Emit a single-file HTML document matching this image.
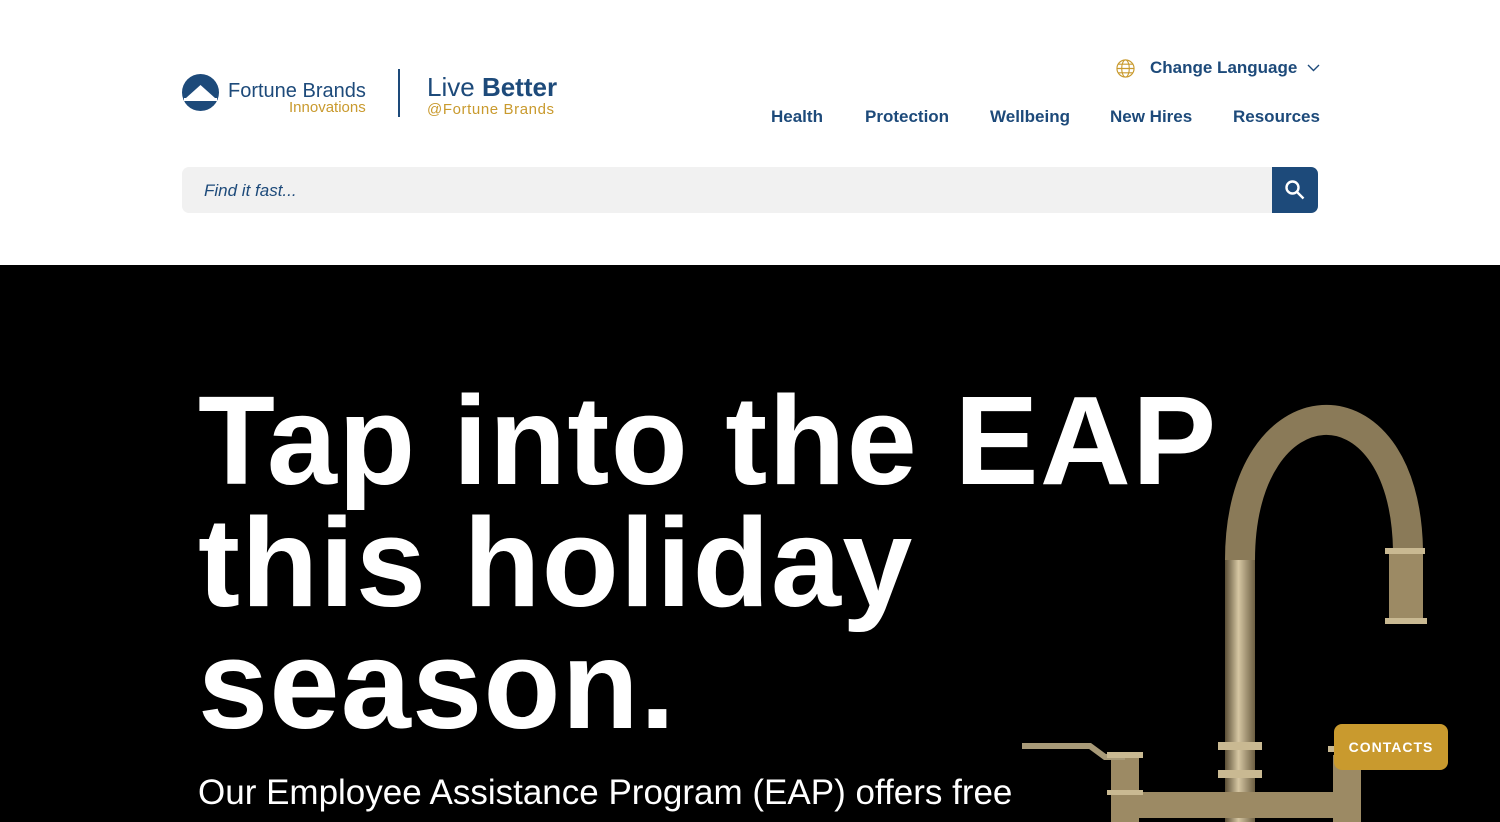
<!DOCTYPE html>
<html><head><meta charset="utf-8"><style>
*{margin:0;padding:0;box-sizing:border-box}
body{width:1500px;height:822px;overflow:hidden;background:#fff;font-family:"Liberation Sans",sans-serif;position:relative}
.blue{color:#1d4a7a}
.gold{color:#c99a2e}
.nav a{position:absolute;top:107px;font-size:17px;font-weight:bold;color:#1d4a7a;text-decoration:none}
.hero{position:absolute;left:0;top:265px;width:1500px;height:557px;background:#000;overflow:hidden}
.h1{position:absolute;left:198px;color:#fff;font-weight:bold;font-size:126px;letter-spacing:1.3px;line-height:1;white-space:nowrap}
</style></head><body>
<svg style="position:absolute;left:182px;top:74px" width="37" height="37" viewBox="0 0 37 37"><circle cx="18.5" cy="18.5" r="18.5" fill="#1d4a7a"/><path d="M4 24 L18.5 11 L33 24 Z" fill="#fff"/><rect x="2" y="24" width="33" height="3" fill="#fff"/></svg>
<div class="blue" style="position:absolute;left:228px;top:80px;font-size:20px">Fortune Brands</div>
<div class="gold" style="position:absolute;left:289px;top:99px;font-size:15px">Innovations</div>
<div style="position:absolute;left:398px;top:69px;width:2px;height:48px;background:#1d4a7a"></div>
<div class="blue" style="position:absolute;left:427px;top:72px;font-size:26px"><span style="font-weight:300">Live</span> <b>Better</b></div>
<div class="gold" style="position:absolute;left:427px;top:101px;font-size:15px;letter-spacing:.6px">@Fortune Brands</div>
<svg style="position:absolute;left:1116px;top:59px" width="19" height="19" viewBox="0 0 20 20" fill="none" stroke="#c99a2e" stroke-width="1.2"><circle cx="10" cy="10" r="9"/><ellipse cx="10" cy="10" rx="4" ry="9"/><path d="M1 10h18M2.5 5.5h15M2.5 14.5h15"/></svg>
<div class="blue" style="position:absolute;left:1150px;top:58px;font-size:17px;font-weight:bold">Change Language</div>
<svg style="position:absolute;left:1307px;top:64px" width="13" height="8" viewBox="0 0 13 8"><path d="M1 1l5.5 5.5L12 1" fill="none" stroke="#1d4a7a" stroke-width="1.4"/></svg>
<div class="nav"><a style="left:771px">Health</a><a style="left:865px">Protection</a><a style="left:990px">Wellbeing</a><a style="left:1110px">New Hires</a><a style="left:1233px">Resources</a></div>
<div style="position:absolute;left:182px;top:167px;width:1136px;height:46px;background:#f1f1f1;border-radius:7px"></div>
<div style="position:absolute;left:204px;top:181px;font-size:17px;font-style:italic;color:#1d4a7a">Find it fast...</div>
<div style="position:absolute;left:1272px;top:167px;width:46px;height:46px;background:#1d4a7a;border-radius:0 7px 7px 0"></div>
<svg style="position:absolute;left:1284px;top:179px" width="22" height="22" viewBox="0 0 22 22" fill="none" stroke="#fff" stroke-width="2.4"><circle cx="8.5" cy="8.5" r="6"/><path d="M13 13l6.5 6.5"/></svg>
<div class="hero">
<svg style="position:absolute;left:0;top:0" width="1500" height="557" viewBox="0 265 1500 557">
<defs><linearGradient id="g" gradientUnits="userSpaceOnUse" x1="1225" y1="0" x2="1255" y2="0"><stop offset="0" stop-color="#5a4d35"/><stop offset=".45" stop-color="#d6c7a3"/><stop offset="1" stop-color="#6c5e42"/></linearGradient></defs>
<path d="M1240 560 C1240 380 1405 370 1408 550" fill="none" stroke="#8a7a58" stroke-width="30"/>
<path d="M1240 830 L1240 560" fill="none" stroke="url(#g)" stroke-width="30"/>
<g fill="none" stroke="#9c8a64">
<path d="M1406 552 L1406 620" stroke-width="34"/>
<path d="M1120 805 L1350 805" stroke-width="26"/>
<path d="M1125 755 L1125 822" stroke-width="28"/>
<path d="M1347 755 L1347 822" stroke-width="28"/>
<path d="M1022 746 L1090 746 L1105 757 L1125 757" stroke-width="6" stroke="#a89a78"/>
</g>
<g fill="#c9b992"><rect x="1218" y="742" width="44" height="8"/><rect x="1218" y="770" width="44" height="8"/><rect x="1107" y="752" width="36" height="6"/><rect x="1385" y="548" width="40" height="6"/><rect x="1385" y="618" width="42" height="6"/><rect x="1328" y="746" width="36" height="6"/><rect x="1107" y="790" width="36" height="5"/></g>
</svg>
<div class="h1" style="top:113px">Tap into the EAP</div>
<div class="h1" style="top:235px">this holiday</div>
<div class="h1" style="top:357px">season.</div>
<div style="position:absolute;left:198px;top:508px;color:#fff;font-size:35px;font-weight:300;white-space:nowrap">Our Employee Assistance Program (EAP) offers free</div>
</div>
<div style="position:absolute;left:1334px;top:724px;width:114px;height:46px;background:#c99a2e;border-radius:8px;color:#fff;font-weight:bold;font-size:14px;letter-spacing:1px;text-align:center;line-height:46px">CONTACTS</div>
</body></html>
